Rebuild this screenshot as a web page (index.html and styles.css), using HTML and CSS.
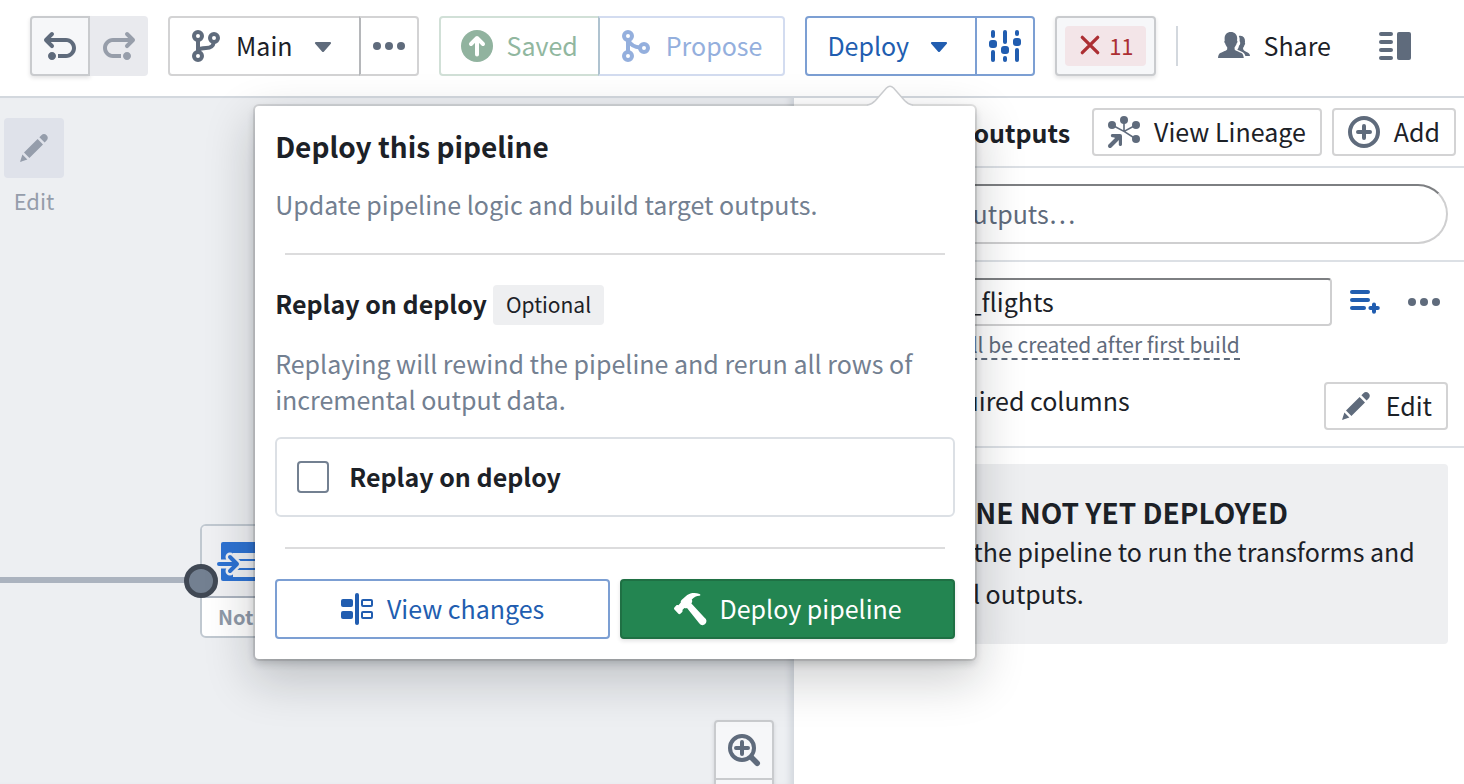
FILE: index.html
```html
<!DOCTYPE html>
<html lang="en">
<head>
<meta charset="utf-8">
<title>Pipeline Builder</title>
<link rel="stylesheet" href="styles.css">
</head>
<body>
<header class="toolbar">
  <div class="group">
    <button class="btn raised icon-only" type="button" aria-label="Undo">
      <svg class="icon" viewBox="0 0 16 16"><path d="M4 11c-1.1 0-2 .9-2 2s.9 2 2 2 2-.9 2-2-.9-2-2-2zm7-7H3.410L4.700 2.710c.19-.18.3-.43.3-.71a1.003 1.003 0 00-1.710-.71l-3 3C.11 4.470 0 4.720 0 5c0 .28.11.53.29.71l3 3a1.003 1.003 0 001.420-1.420L3.410 6H11c1.660 0 3 1.340 3 3s-1.340 3-3 3H7v2h4c2.760 0 5-2.240 5-5s-2.240-5-5-5z"/></svg>
    </button>
    <button class="btn disabled icon-only" type="button" aria-label="Redo" disabled>
      <svg class="icon flip" viewBox="0 0 16 16"><path d="M4 11c-1.1 0-2 .9-2 2s.9 2 2 2 2-.9 2-2-.9-2-2-2zm7-7H3.410L4.700 2.710c.19-.18.3-.43.3-.71a1.003 1.003 0 00-1.710-.71l-3 3C.11 4.470 0 4.720 0 5c0 .28.11.53.29.71l3 3a1.003 1.003 0 001.420-1.420L3.410 6H11c1.660 0 3 1.340 3 3s-1.340 3-3 3H7v2h4c2.760 0 5-2.240 5-5s-2.240-5-5-5z"/></svg>
    </button>
  </div>
  <div class="group">
    <button class="btn" type="button" aria-haspopup="menu">
      <svg class="icon line" viewBox="0 0 16 16"><circle cx="4" cy="3" r="2"/><circle cx="4" cy="13" r="2"/><circle cx="12" cy="4" r="2"/><path d="M4 5v6M4 10.300C5 9 6.500 9 8 9c2.500 0 3.600-.8 3.900-3"/></svg>
      <span>Main</span>
      <svg class="icon" viewBox="0 0 16 16"><path d="M4.500 6h7c.5 0 .7.5.4.9L8.500 10.700c-.3.4-.7.4-1 0L4.100 6.900C3.800 6.500 4 6 4.500 6z"/></svg>
    </button>
    <button class="btn icon-only" type="button" aria-label="More">
      <svg class="icon" viewBox="0 0 16 16"><circle cx="2" cy="8" r="2"/><circle cx="8" cy="8" r="2"/><circle cx="14" cy="8" r="2"/></svg>
    </button>
  </div>
  <div class="group">
    <button class="btn saved" type="button" disabled>
      <svg class="icon" viewBox="0 0 16 16"><circle cx="8" cy="8" r="8"/><path class="cut" d="M8 12.200V4.200M5 7l3-3 3 3"/></svg>
      <span>Saved</span>
    </button>
    <button class="btn propose" type="button" disabled>
      <svg class="icon line" viewBox="0 0 16 16"><circle cx="4" cy="3" r="2"/><circle cx="4" cy="13" r="2"/><circle cx="12" cy="9" r="2"/><path d="M4 5v6M4.300 5.500C5.500 7.600 7.500 8.600 10 8.800"/></svg>
      <span>Propose</span>
    </button>
  </div>
  <div class="group">
    <div class="anchor">
      <button class="btn primary" type="button" aria-haspopup="dialog" aria-expanded="true">
        <span>Deploy</span>
        <svg class="icon" viewBox="0 0 16 16"><path d="M4.500 6h7c.5 0 .7.5.4.9L8.500 10.700c-.3.4-.7.4-1 0L4.100 6.900C3.800 6.500 4 6 4.500 6z"/></svg>
      </button>
      <section class="popover" role="dialog" aria-labelledby="deploy-title">
        <svg class="arrow" viewBox="0 0 60 26"><path class="arrow-edge" d="M7 22C11 21.500 13.500 19.500 16 17L27 4.500Q30 1.500 33 4.500L44 17C46.500 19.500 49 21.500 53 22"/><path class="arrow-fill" d="M7 22C11 21.500 13.500 19.500 16 17L27 4.500Q30 1.500 33 4.500L44 17C46.500 19.500 49 21.500 53 22V26H7z"/></svg>
        <h1 id="deploy-title" class="title">Deploy this pipeline</h1>
        <p class="muted">Update pipeline logic and build target outputs.</p>
        <hr class="rule">
        <div class="heading-row"><h2 class="heading">Replay on deploy</h2><span class="tag">Optional</span></div>
        <p class="muted">Replaying will rewind the pipeline and rerun all rows of incremental output data.</p>
        <label class="option"><input class="check" type="checkbox"><span>Replay on deploy</span></label>
        <hr class="rule">
        <div class="actions">
          <button class="btn primary" type="button">
            <svg class="icon" viewBox="0 0 16 16"><rect x="0" y="3" width="6" height="4" rx="1"/><rect x="0" y="9" width="6" height="4" rx="1"/><rect x="7" y="0" width="2" height="16" rx="1"/><path fill-rule="evenodd" d="M11 3h4a1 1 0 011 1v2a1 1 0 01-1 1h-4a1 1 0 01-1-1V4a1 1 0 011-1zm0 1v2h4V4zM11 9h4a1 1 0 011 1v2a1 1 0 01-1 1h-4a1 1 0 01-1-1v-2a1 1 0 011-1zm0 1v2h4v-2z"/></svg>
            <span>View changes</span>
          </button>
          <button class="btn success" type="button">
            <svg class="icon" viewBox="0 0 16 16"><path d="M12.800.5C10.800-.3 8.300-.2 6.600 1L3.900 3.400c-.5.4-.6.9-.5 1.400L2.200 6.100c-.4-.2-.8-.2-1.100.1L.2 7.200c-.3.3-.2.7 0 1l2 2.200c.3.3.7.3 1 0l.9-.9c.3-.3.2-.7.1-1l1-1c.5.2.9.2 1.300 0l6.100 7.600c.8 1.100 2.100 1.300 3 .4 1-1 .8-2.300-.3-3.100L8.700 5.200l.1-.2c.4-.5.4-1 .1-1.700 1.100-1.300 2.300-1.800 3.800-1.900.6-.1.7-.7.1-.9z"/></svg>
            <span>Deploy pipeline</span>
          </button>
        </div>
      </section>
    </div>
    <button class="btn primary icon-only" type="button" aria-label="Deploy settings">
      <svg class="icon" viewBox="0 0 16 16"><rect x="1" y="0" width="2" height="4" rx="1"/><rect x="0" y="5" width="4" height="4" rx="1.500"/><rect x="1" y="10" width="2" height="6" rx="1"/><rect x="7" y="0" width="2" height="7" rx="1"/><rect x="6" y="8" width="4" height="4" rx="1.500"/><rect x="7" y="13" width="2" height="3" rx="1"/><rect x="13" y="0" width="2" height="3" rx="1"/><rect x="12" y="4" width="4" height="4" rx="1.500"/><rect x="13" y="9" width="2" height="7" rx="1"/></svg>
    </button>
  </div>
  <button class="btn raised errors" type="button" aria-label="11 errors">
    <span class="error-tag"><svg class="cross" viewBox="0 0 20 20"><path d="M3 3l14 14M17 3L3 17"/></svg><span>11</span></span>
  </button>
  <span class="divider"></span>
  <div class="group tail">
    <button class="btn minimal" type="button">
      <svg class="icon" viewBox="0 0 16 16"><path d="M6.400 1c1.900 0 3.200 1.300 3.200 3.200 0 .4-.1.8-.1 1.100.4.200.3 1.100-.2 1.500-.2.8-.6 1.400-1 1.800v1c.1.700 2.100 1.200 3.200 1.800 1 .5 1.200 1.300 1.400 2.600H0c.1-1.300.4-2.100 1.400-2.600 1.100-.6 3-1.100 3.200-1.800v-1c-.4-.4-.8-1-1-1.800-.5-.4-.6-1.300-.2-1.500-.1-.4-.1-.8-.1-1.100C3.300 2.300 4.500 1 6.400 1z"/><path d="M10.400 3c.3-.1.500-.1.800-.1 1.600.1 2.400 1.200 2.300 2.800 0 .3 0 .5-.1.7.3.2.2.8-.2 1.200-.1.600-.4 1-.7 1.400 0 1.300.8 1.500 1.800 2 1.100.5 1.600.9 1.700 2h-2.300c-.3-1-.9-1.700-2.100-2.200-1.100-.5-1.900-.7-1.900-1 .4-.5.600-1.100.8-1.900.7-.7.800-1.700.3-2.400.1-1 0-1.700-.4-2.500z"/></svg>
      <span>Share</span>
    </button>
    <button class="btn minimal icon-only" type="button" aria-label="Toggle panel">
      <svg class="icon" viewBox="0 0 16 16"><rect x="0" y="1" width="7" height="2" rx="1"/><rect x="0" y="5" width="7" height="2" rx="1"/><rect x="0" y="9" width="7" height="2" rx="1"/><rect x="0" y="13" width="7" height="2" rx="1"/><rect x="9" y="1" width="7" height="14" rx="1"/></svg>
    </button>
  </div>
</header>
<main class="workspace">
  <section class="canvas" aria-label="Pipeline graph">
    <div class="tool">
      <button class="tool-button" type="button" aria-label="Edit" disabled><svg class="icon" viewBox="0 0 16 16"><path d="M1 15l1.200-3.700 2.500 2.500zM3 10.300l6.800-6.800 2.700 2.700L5.700 13zM10.700 2.600l1-1c.8-.8 1.800-.8 2.600 0s.8 1.800 0 2.600l-1 1z"/></svg></button>
      <span>Edit</span>
    </div>
    <div class="edge"></div>
    <div class="node">
      <div class="node-top">
        <svg class="node-icon" viewBox="0 0 64 48"><rect class="node-blue" x="5" y="4" width="59" height="39" rx="2"/><path class="node-gap" d="M17 15h47v6H17zM17 23h47v7H17zM17 32h47v7H17z"/><path class="node-halo" d="M2 26h18M14 19l7 7-7 7"/><path class="node-arrow" d="M3 26h17M14 19l7 7-7 7"/></svg>
      </div>
      <div class="node-label">Not deployed</div>
    </div>
    <div class="port"></div>
    <div class="zoom">
      <button class="zoom-button" type="button" aria-label="Zoom in"><svg class="icon line" viewBox="0 0 16 16"><circle cx="7" cy="7" r="6"/><path stroke-linecap="round" d="M4 7h6M7 4v6"/><path stroke-width="2.800" stroke-linecap="round" d="M12 12l2.600 2.600"/></svg></button>
      <button class="zoom-button" type="button" aria-label="Zoom out"><svg class="icon line" viewBox="0 0 16 16"><circle cx="7" cy="7" r="6"/><path stroke-linecap="round" d="M4 7h6"/><path stroke-width="2.800" stroke-linecap="round" d="M12 12l2.600 2.600"/></svg></button>
    </div>
  </section>
  <aside class="panel">
    <div class="panel-head">
      <h2 class="heading">Pipeline outputs</h2>
      <button class="btn small" type="button">
        <svg class="icon" viewBox="0 0 16 16"><circle cx="8" cy="2" r="2"/><circle cx="2" cy="4.500" r="2"/><circle cx="14" cy="4.500" r="2"/><circle cx="14" cy="11.500" r="2"/><path class="thin" d="M8 2v6M2 4.500L8 7.700l6-3.200M8 7.700l6 3.800"/><path class="thick" stroke-linecap="round" d="M1 15l4-4"/><path d="M2 9h4a1 1 0 011 1v4a.8.8 0 01-1.600.4V11.500L2.500 10.600A.8.8 0 012 9z"/></svg>
        <span>View Lineage</span>
      </button>
      <button class="btn small" type="button">
        <svg class="icon line" viewBox="0 0 16 16"><circle cx="8" cy="8" r="7"/><path stroke-linecap="round" d="M5 8h6M8 5v6"/></svg>
        <span>Add</span>
      </button>
    </div>
    <div class="search-row">
      <input class="field search" type="search" aria-label="Search outputs" placeholder="Search outputs…">
    </div>
    <div class="output">
      <div class="name-row">
        <input class="field name" type="text" aria-label="Output name" value="international_flights">
        <button class="bare" type="button" aria-label="Add to list"><svg class="icon blue" viewBox="0 0 16 16"><rect x="0" y="2" width="10" height="2" rx="1"/><rect x="0" y="6" width="10" height="2" rx="1"/><rect x="0" y="10" width="8" height="2" rx="1"/><path class="thick" stroke-linecap="round" d="M10.200 11h3.700M12 9.200v3.700"/></svg></button>
        <button class="bare" type="button" aria-label="More"><svg class="icon" viewBox="0 0 16 16"><circle cx="2" cy="8" r="2"/><circle cx="8" cy="8" r="2"/><circle cx="14" cy="8" r="2"/></svg></button>
      </div>
      <div class="note"><span class="note-text">Dataset will be created after first build</span></div>
      <div class="columns-row">
        <span class="columns-text">No required columns</span>
        <button class="btn small" type="button">
          <svg class="icon" viewBox="0 0 16 16"><path d="M1 15l1.200-3.700 2.500 2.500zM3 10.300l6.800-6.800 2.700 2.700L5.700 13zM10.700 2.600l1-1c.8-.8 1.800-.8 2.600 0s.8 1.800 0 2.600l-1 1z"/></svg>
          <span>Edit</span>
        </button>
      </div>
    </div>
    <div class="callout">
      <h3 class="callout-title">PIPELINE NOT YET DEPLOYED</h3>
      <p class="callout-text">Deploy the pipeline to run the transforms and build all outputs.</p>
    </div>
  </aside>
</main>
</body>
</html>
```

FILE: styles.css
```css
* { box-sizing: border-box; }
body {
  margin: 0;
  height: 100vh;
  display: flex;
  flex-direction: column;
  overflow: hidden;
  background: #fff;
  color: #1c2127;
  font-family: "Noto Sans CJK SC", "Noto Sans", sans-serif;
  font-size: 25px;
  line-height: 36px;
}
h1, h2, h3, p { margin: 0; }
button, input { font: inherit; color: inherit; }
.icon { width: 32px; height: 32px; flex: none; display: block; fill: #5f6b7c; overflow: visible; }
.line { fill: none; stroke: #5f6b7c; stroke-width: 2; }
.flip { transform: scaleX(-1); }
.thin { fill: none; stroke: #5f6b7c; stroke-width: 0.8; }
.thick { fill: none; stroke: #5f6b7c; stroke-width: 2; }
.blue { fill: #215db0; }
.blue .thick { stroke: #215db0; }
.cut { fill: none; stroke: #fff; stroke-width: 2; stroke-linecap: round; stroke-linejoin: round; }

.toolbar {
  display: flex;
  align-items: center;
  gap: 20px;
  padding: 16px 30px 20px;
  border-bottom: 2px solid #d3d8de;
  white-space: nowrap;
}
.group { display: flex; }
.group > * + * { margin-left: -2px; }
.btn {
  height: 60px;
  display: flex;
  align-items: center;
  justify-content: center;
  gap: 14px;
  padding: 0 20px;
  border: 2px solid #d3d3d4;
  border-radius: 4px;
  background: #fff;
}
.btn > span, .option > span { padding-bottom: 2px; }
.group > .btn:first-child:not(:last-child), .anchor > .btn { border-top-right-radius: 0; border-bottom-right-radius: 0; }
.group > .btn:last-child:not(:first-child) { border-top-left-radius: 0; border-bottom-left-radius: 0; border-left-color: #b5b7ba; }
.btn.icon-only { width: 60px; padding: 0; }
.btn.raised { background: #f6f7f9; border-color: #c9cbce; box-shadow: 0 2px 4px rgba(17, 20, 24, 0.12); }
.group > .btn.disabled:last-child { background: #e9eaee; border-color: #e9eaee; margin-left: 0; width: 58px; }
.disabled .icon { fill: #979eaa; }
.btn.saved { border-color: #d1e0d7; color: #91b79f; }
.saved .icon { fill: #91b39f; }
.group > .btn.propose:last-child { padding-right: 21px; border-color: #d3dcf0; border-left-color: #afc3d0; color: #94afdd; }
.propose .line { stroke: #94afdd; }
.btn.primary { border-color: #7c9fd3; color: #215db0; }
.group > .btn.primary:last-child { border-left-color: #5480c2; }
.primary .icon { fill: #215db0; }
.btn.success { background: #238551; border-color: #1f7044; color: #fff; box-shadow: 0 2px 4px rgba(17, 20, 24, 0.12); }
.success .icon { fill: #fff; }
.btn.errors { padding: 0 8px; }
.btn > .error-tag {
  display: flex;
  align-items: center;
  gap: 8px;
  height: 40px;
  padding: 0 12px 2px 14px;
  border-radius: 4px;
  background: #f3e5e8;
  color: #ac2f33;
  font-size: 22px;
}
.cross { width: 22px; height: 22px; fill: none; stroke: #ac2f33; stroke-width: 3; stroke-linecap: round; }
.divider { width: 2px; height: 40px; background: #d3d8de; }
.btn.minimal { border-color: transparent; background: none; }
.group.tail > .btn.minimal:last-child { border-color: transparent; }
.tail { gap: 14px; margin-left: -2px; }

.anchor { position: relative; z-index: 5; }
.popover {
  position: absolute;
  top: 90px;
  right: 2px;
  width: 720px;
  padding: 22px 20px 20px;
  border-radius: 4px;
  background: #fff;
  white-space: normal;
  box-shadow: 0 0 0 2px rgba(17, 20, 24, 0.1), 0 4px 8px rgba(17, 20, 24, 0.2), 0 18px 48px 4px rgba(17, 20, 24, 0.2);
}
.arrow { position: absolute; top: -22px; right: 55px; width: 60px; height: 26px; }
.arrow-edge { fill: none; stroke: #c9cbce; stroke-width: 3; }
.arrow-fill { fill: #fff; }
.title { font-size: 28px; line-height: 36px; font-weight: 700; margin-bottom: 22px; }
.heading { font-size: 25px; line-height: 36px; font-weight: 700; }
.muted { color: #738091; }
.rule { height: 2px; margin: 30px 10px; border: 0; background: #dcdcdd; }
.title + .muted + .rule { margin-top: 31px; }
.heading-row { display: flex; align-items: flex-start; gap: 6px; margin-bottom: 20px; }
.tag { height: 40px; padding: 0 13px; border-radius: 4px; background: #eeeff1; font-size: 21px; line-height: 38px; }
.option {
  display: flex;
  align-items: center;
  gap: 20px;
  height: 80px;
  margin-top: 20px;
  padding: 0 20px;
  border: 2px solid #dce0e5;
  border-radius: 6px;
  font-weight: 700;
}
.check { appearance: none; width: 32px; height: 32px; margin: 0; border: 2px solid #738091; border-radius: 4px; background: #fff; }
.actions { display: grid; grid-template-columns: 1fr 1fr; gap: 10px; }

.workspace { flex: 1; min-height: 0; display: grid; grid-template-columns: minmax(0, 1fr) 670px; }
.canvas { position: relative; overflow: hidden; background: #edeff2; box-shadow: inset -8px 0 6px -4px #d3d8de; }
.tool { width: 60px; margin: 20px 4px; display: flex; flex-direction: column; align-items: center; gap: 4px; color: #959dab; font-size: 22px; }
.tool-button { width: 60px; height: 60px; display: grid; place-items: center; padding: 0; border: 0; border-radius: 4px; background: #dfe2ea; }
.tool-button .icon { fill: #959dab; }
.edge { position: absolute; left: 0; top: 479px; width: 202px; height: 6px; background: #abb3bf; }
.node { position: absolute; left: 200px; top: 426px; width: 240px; border: 2px solid #c0c8d0; border-radius: 6px; background: #fff; overflow: hidden; }
.node-top { height: 72px; padding: 12px 14px; border-bottom: 2px solid #abb3bf; background: #eff0f3; }
.node-icon { display: block; width: 64px; height: 48px; }
.node-blue { fill: #2d72d2; }
.node-gap { fill: #eff0f3; }
.node-halo { fill: none; stroke: #eff0f3; stroke-width: 9; stroke-linecap: round; stroke-linejoin: round; }
.node-arrow { fill: none; stroke: #2d72d2; stroke-width: 4; stroke-linecap: round; stroke-linejoin: round; }
.node-label { padding: 0 16px; font-size: 20px; line-height: 38px; font-weight: 700; color: #8f99a8; }
.port { position: absolute; left: 184px; top: 466px; width: 34px; height: 34px; border: 5px solid #404854; border-radius: 50%; background: #738091; }
.zoom { position: absolute; right: 20px; bottom: -54px; display: flex; flex-direction: column; border-radius: 4px; box-shadow: 0 2px 4px rgba(17, 20, 24, 0.12); }
.zoom-button { width: 60px; height: 60px; display: grid; place-items: center; padding: 0; border: 2px solid #c9cbce; border-radius: 4px 4px 0 0; background: #f6f7f9; }
.zoom-button + .zoom-button { margin-top: -2px; border-radius: 0 0 4px 4px; }

.panel { background: #fff; white-space: nowrap; }
.panel-head { display: flex; align-items: center; justify-content: flex-end; gap: 10px; height: 70px; padding: 0 8px; border-bottom: 2px solid #dce0e5; }
.panel-head .heading { margin-right: 12px; }
.btn.small { height: 48px; padding: 0 14px; }
.search-row { padding: 16px; border-bottom: 2px solid #dce0e5; }
.field { display: block; border: 2px solid #cfcfd0; border-top-color: #7d7f82; background: #fff; outline: 0; }
.search { appearance: none; width: 100%; height: 60px; padding: 0 60px 2px; border-radius: 30px; }
.search::placeholder { color: #5f6b7c; opacity: 1; }
.output { padding: 16px 16px 16px; border-bottom: 2px solid #dce0e5; }
.name-row { display: flex; align-items: center; }
.name { flex: 1; min-width: 0; height: 48px; padding: 0 4px 2px; border-radius: 4px; }
.bare { padding: 0; border: 0; background: none; margin-left: 18px; }
.bare + .bare { margin-left: 26px; margin-right: 8px; }
.note { padding-left: 60px; color: #5f6b7c; font-size: 21px; line-height: 28px; margin-top: 4px; }
.note-text { display: block; width: max-content; border-bottom: 2px dashed #5f6b7c; }
.columns-row { display: flex; align-items: flex-start; justify-content: space-between; margin-top: 22px; }
.columns-text { padding-left: 76px; }
.callout { margin: 16px; padding: 30px 20px 30px 76px; border-radius: 4px; background: #eeeff1; }
.callout-title { font-size: 28px; line-height: 36px; font-weight: 700; }
.callout-text { line-height: 42px; white-space: normal; }
```
